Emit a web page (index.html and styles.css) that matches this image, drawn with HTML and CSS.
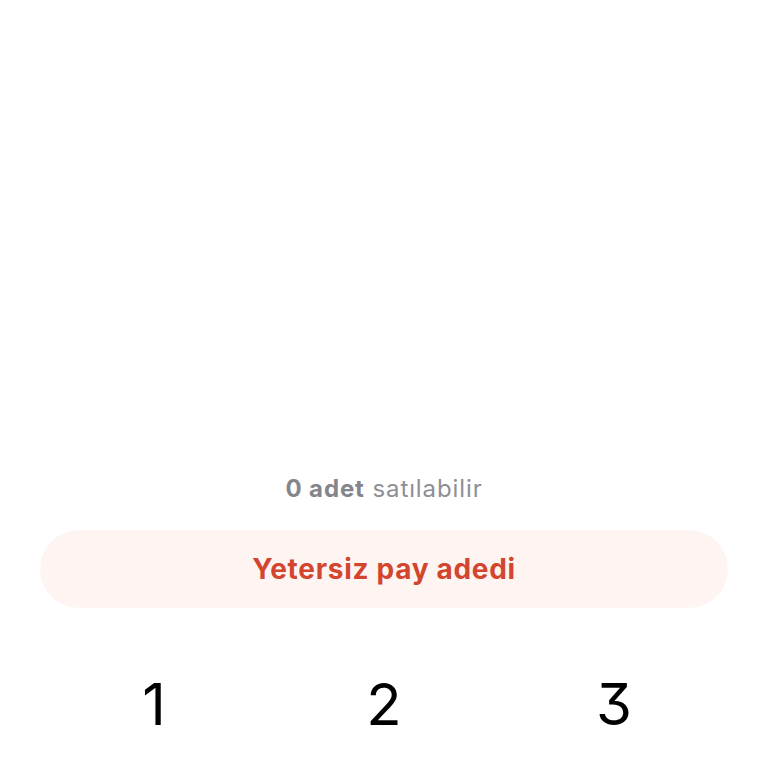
FILE: index.html
```html
<!DOCTYPE html>
<html lang="tr">
  <head>
    <meta charset="UTF-8" />
    <title>Satış</title>
    <link rel="stylesheet" href="styles.css">
  </head>

  <body>
    <div class="screen">
      <!-- satılabilir adet bilgisi -->
      <p class="available"><b>0 adet</b> satılabilir</p>

      <!-- pasif buton -->
      <button class="submit" type="button">Yetersiz pay adedi</button>

      <!-- tuş takımı -->
      <div class="keypad">
        <span class="key">1</span>
        <span class="key">2</span>
        <span class="key">3</span>
      </div>
    </div>
  </body>
</html>
```

FILE: styles.css
```css
* {
  margin: 0;
  padding: 0;
  box-sizing: border-box;
}

body {
  background: #fff;
  font-family: Inter, "Noto Sans", sans-serif;
}

.screen {
  display: flex;
  flex-direction: column;
  align-items: center;
  height: 768px;
  padding: 475px 40px 0;
  overflow: hidden;
}

.available {
  font-size: 24px;
  line-height: 28px;
  letter-spacing: 0.9px;
  color: #8e8e95;
}

.available b {
  font-weight: 700;
  color: #84848b;
}

.submit {
  display: flex;
  align-items: center;
  justify-content: center;
  width: 100%;
  height: 78px;
  margin-top: 27px;
  border: none;
  border-radius: 39px;
  background-color: #fef5f2;
  color: #d2452f;
  font-family: inherit;
  font-size: 28px;
  font-weight: 700;
  letter-spacing: 0.7px;
}

.keypad {
  display: grid;
  grid-template-columns: repeat(3, 1fr);
  width: 690px;
  margin-top: 61px;
}

.keypad .key {
  text-align: center;
  font-size: 58px;
  line-height: 70px;
  font-weight: 400;
  color: #000;
  font-feature-settings: "cv09";
}
```
